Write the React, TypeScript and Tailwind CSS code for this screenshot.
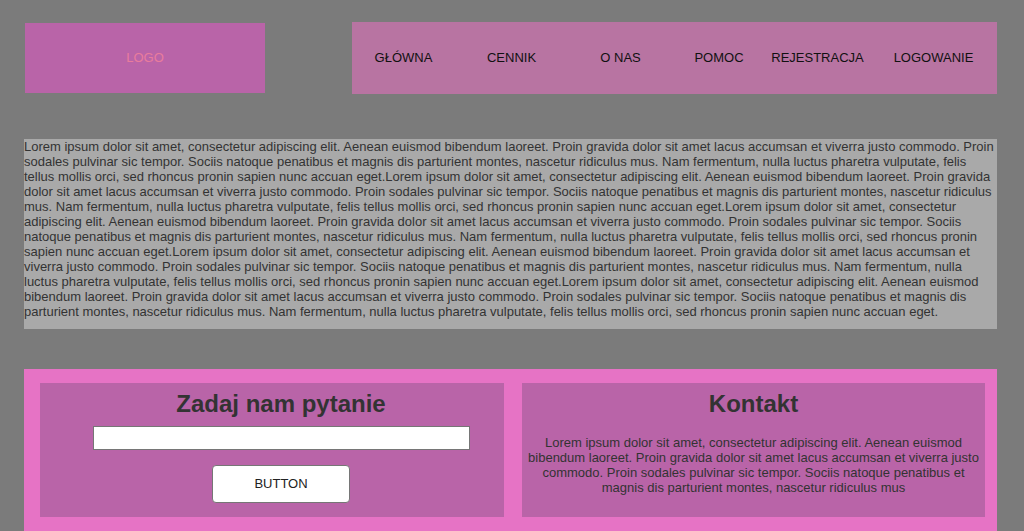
import React from "react"

const lorem =
  "Lorem ipsum dolor sit amet, consectetur adipiscing elit. Aenean euismod bibendum laoreet. Proin gravida dolor sit amet lacus accumsan et viverra justo commodo. Proin sodales pulvinar sic tempor. Sociis natoque penatibus et magnis dis parturient montes, nascetur ridiculus mus. Nam fermentum, nulla luctus pharetra vulputate, felis tellus mollis orci, sed rhoncus pronin sapien nunc accuan eget."

const navItems = [
  { label: "GŁÓWNA", w: "w-[103px]" },
  { label: "CENNIK", w: "w-[113px]" },
  { label: "O NAS", w: "w-[105px]" },
  { label: "POMOC", w: "w-[92px]" },
  { label: "REJESTRACJA", w: "w-[105px]" },
  { label: "LOGOWANIE", w: "w-[127px]" },
]

function Header() {
  return (
    <div className="flex items-start pt-[22px]">
      <div className="ml-[25px] mt-[1px] flex h-[70px] w-[240px] items-center justify-center bg-[#b964a8] text-[13px] text-[#e97c9c]">
        LOGO
      </div>
      <div className="ml-[87px] flex h-[72px] w-[645px] items-center bg-[#b874a2] text-[13px] text-[#111]">
        {navItems.map((item, i) => (
          <a key={i} className={`${item.w} text-center`}>
            {item.label}
          </a>
        ))}
      </div>
    </div>
  )
}

function App() {
  return (
    <div className="min-h-screen overflow-hidden bg-[#7b7b7b] font-['Liberation_Sans',Arial,sans-serif]">
      <Header />

      <div className="mx-[24px] mt-[45px] w-[973px] bg-[#a9a9a9] pb-[10px] text-[13px] leading-[15px] text-[#333]">
        <p>{lorem + lorem + lorem + lorem + lorem}</p>
      </div>

      <div className="ml-[24px] mt-[40px] flex h-[162px] w-[973px] gap-[18px] bg-[#e673c5] pl-[16px] pr-[12px] pt-[14px] pb-[14px]">
        <div className="flex w-[464px] flex-col items-center bg-[#b964a8] pl-[18px] pt-[7px]">
          <h2 className="text-[24px] font-bold leading-[28px] text-[#333]">Zadaj nam pytanie</h2>
          <input className="mt-[8px] h-[24px] w-[377px] border border-[#767676] bg-white" />
          <button className="mt-[15px] h-[38px] w-[138px] rounded-[4px] border border-[#767676] bg-white text-[13px] text-[#222]">
            BUTTON
          </button>
        </div>
        <div className="flex w-[463px] flex-col items-center bg-[#b964a8] px-[6px] pt-[7px] text-center">
          <h2 className="text-[24px] font-bold leading-[28px] text-[#333]">Kontakt</h2>
          <p className="mt-[17px] text-[13px] leading-[15px] text-[#333]">
            Lorem ipsum dolor sit amet, consectetur adipiscing elit. Aenean euismod bibendum laoreet. Proin gravida dolor sit amet lacus accumsan et viverra justo commodo. Proin sodales pulvinar sic tempor. Sociis natoque penatibus et magnis dis parturient montes, nascetur ridiculus mus
          </p>
        </div>
      </div>
    </div>
  )
}

export default App
